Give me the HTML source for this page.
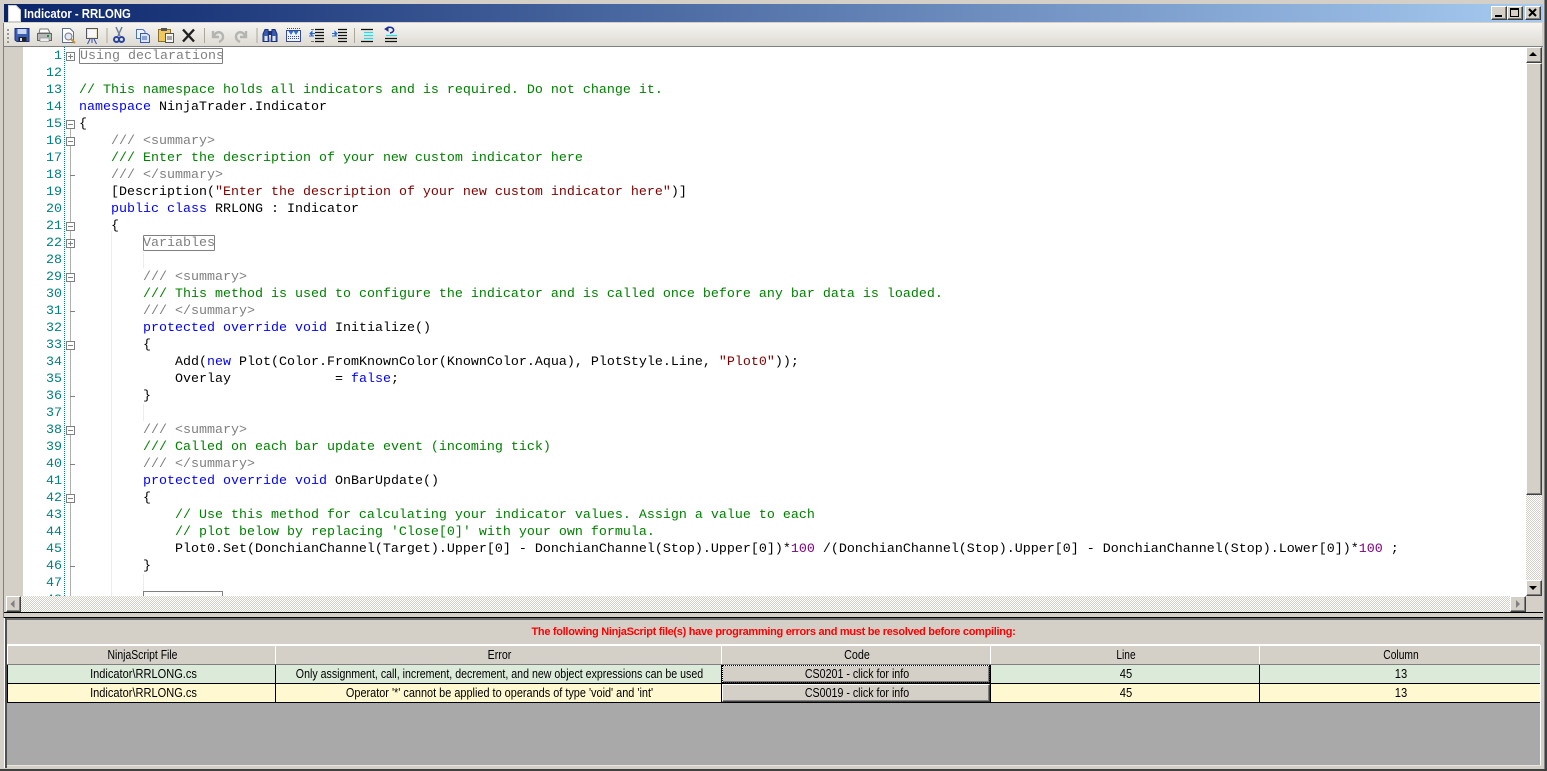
<!DOCTYPE html>
<html><head><meta charset="utf-8"><style>
html,body{margin:0;padding:0;background:#d4d0c8;overflow:hidden}
#w{position:relative;width:1547px;height:771px;overflow:hidden;background:#d4d0c8;font-family:"Liberation Sans",sans-serif}
.a{position:absolute}
.l{position:absolute;left:79px;margin-top:1px;height:17px;font:13.33px/17px "Liberation Mono",monospace;white-space:pre;color:#000}
.n{position:absolute;left:24px;margin-top:1px;width:38px;text-align:right;font:13.33px/17px "Liberation Mono",monospace;color:#008080}
.g{color:#008000}.b{color:#0000ff}.y{color:#808080}.r{color:#800000}.p{color:#800080}
.f{position:absolute;left:66px;width:7px;height:7px;border:1px solid #808080;background:#fff;box-sizing:content-box}
.f:before{content:"";position:absolute;left:1px;top:3px;width:5px;height:1px;background:#808080}
.f.x:after{content:"";position:absolute;left:3px;top:1px;width:1px;height:5px;background:#808080}
.e{position:absolute;left:70px;width:5px;height:1px;background:#808080}
.bx{position:absolute;border:1px solid #808080;box-sizing:border-box;height:16px;color:#808080;font:13.33px/15px "Liberation Mono",monospace;white-space:pre;border-radius:1px;background:#fff}
.i{position:absolute;width:1px;background:#ececec}
.btn{position:absolute;background:#d4d0c8;border-top:1px solid #fff;border-left:1px solid #fff;border-right:1px solid #404040;border-bottom:1px solid #404040;box-sizing:border-box;box-shadow:inset -1px -1px 0 #808080}
.chk{position:absolute;background-color:#fff;background-image:conic-gradient(#d4d0c8 25%,#fff 0 50%,#d4d0c8 0 75%,#fff 0);background-size:2px 2px}
.c{position:absolute;text-align:center;font-size:13px;color:#000;box-sizing:border-box;white-space:nowrap;overflow:hidden}
.c span{position:absolute;left:-99px;right:-101px;text-align:center;transform:scaleX(var(--s,.84));transform-origin:center}
.h{background:#d4d0c8;height:20px;top:645px;line-height:18px;border-top:1px solid #fff;border-left:1px solid #fff;border-bottom:1px solid #808080}
.r1{background:#dcebd9;height:19px;top:665px;line-height:18px;border-left:1px solid #000;border-bottom:1px solid #000}
.r2{background:#fff8d0;height:19px;top:684px;line-height:18px;border-left:1px solid #000;border-bottom:1px solid #000}
svg{position:absolute;overflow:visible}
</style></head><body><div id="w">

<!-- outer window edges -->
<div class="a" style="left:1544px;top:0;width:1px;height:771px;background:#808080"></div>
<div class="a" style="left:1545px;top:0;width:2px;height:771px;background:#404040"></div>
<div class="a" style="left:0;top:769px;width:1547px;height:2px;background:#404040"></div>
<div class="a" style="left:3px;top:23px;width:1px;height:595px;background:#808080"></div>
<div class="a" style="left:4px;top:618px;width:1px;height:150px;background:#fff"></div>

<!-- title bar -->
<div class="a" style="left:4px;top:4px;width:1539px;height:18px;background:linear-gradient(90deg,#0a246a,#a6caf0)"></div>
<svg style="left:7px;top:5px" width="15" height="17"><path d="M1.500 .5H9L13.500 5V16.500H1.500Z" fill="#fff" stroke="#d0d0d0"/><path d="M4 2H8.500L12 6V15H4Z" fill="#fff"/></svg>
<div class="a" style="left:24px;top:4px;height:18px;font:bold 13px/19px 'Liberation Sans',sans-serif;color:#fff;white-space:pre;transform:scaleX(.87);transform-origin:left">Indicator - RRLONG</div>
<div class="btn" style="left:1491px;top:6px;width:16px;height:14px"></div>
<div class="a" style="left:1495px;top:15px;width:7px;height:2px;background:#000"></div>
<div class="btn" style="left:1507px;top:6px;width:16px;height:14px"></div>
<div class="a" style="left:1510px;top:8px;width:9px;height:9px;border:1px solid #000;border-top-width:2px;box-sizing:border-box"></div>
<div class="btn" style="left:1525px;top:6px;width:16px;height:14px"></div>
<svg style="left:1528px;top:8px" width="10" height="9"><path d="M1 1L8 8M8 1L1 8" stroke="#000" stroke-width="2"/></svg>

<!-- toolbar -->
<div class="a" style="left:4px;top:23px;width:1538px;height:23px;background:linear-gradient(#f6f5f1,#dedbd4)"></div>
<div class="a" style="left:4px;top:46px;width:1539px;height:1px;background:#808080"></div>
<svg style="left:0;top:0" width="420" height="47">
<!-- grip -->
<path d="M7 29h2v2h-2zM7 33h2v2h-2zM7 37h2v2h-2zM7 41h2v2h-2z" fill="#9a978f"/>
<!-- save -->
<path d="M15 28.500H29V41.500H17L15 40Z" fill="#3a5fb8" stroke="#1c2f78"/><rect x="17.500" y="29" width="9" height="5" fill="#c8d6f2"/><rect x="18.500" y="37" width="8" height="4.500" fill="#222"/><rect x="20" y="38" width="2" height="3" fill="#ddd"/>
<!-- print -->
<path d="M40 29h8l2 4H39Z" fill="#fff" stroke="#777"/><path d="M37.500 33.500H51.500V40.500H37.500Z" fill="#b8b8b8" stroke="#666"/><rect x="40" y="38" width="9" height="3.500" fill="#eee" stroke="#777" stroke-width=".5"/><rect x="47" y="35" width="2" height="2" fill="#0a9a3a"/>
<!-- preview -->
<path d="M62.500 28.500H70L73.500 32V42.500H62.500Z" fill="#fff" stroke="#5c6c94"/><circle cx="68.500" cy="36.500" r="3.500" fill="#dfe8f4" stroke="#778"/><path d="M71 39L75 43" stroke="#c89030" stroke-width="2"/>
<!-- deploy -->
<path d="M86.500 28.500H97.500V38.500H86.500Z" fill="#eee8c8" stroke="#556"/><path d="M90 39L87.500 44M94 39L96.500 44M92 39V43" stroke="#3050a8"/><rect x="88" y="30" width="8" height="7" fill="#f8f8f8"/>
<!-- seps -->
<path d="M107 28V43M204.500 28V43M257 28V43M354.500 28V43" stroke="#aca899"/>
<!-- cut -->
<path d="M116 27L120 36M122 27L118 36" stroke="#6f7f99" stroke-width="1.500"/><circle cx="116.500" cy="39.500" r="2.500" fill="none" stroke="#2a45a0" stroke-width="2"/><circle cx="121.500" cy="39.500" r="2.500" fill="none" stroke="#2a45a0" stroke-width="2"/>
<!-- copy -->
<path d="M136.500 29.500H143L145 31.500V38.500H136.500Z" fill="#eef2fb" stroke="#5070b8"/><path d="M140.500 33.500H147L149.500 35.500V42.500H140.500Z" fill="#dbe6f8" stroke="#3a5cb0"/><path d="M142 37h5M142 39h5" stroke="#3a5cb0"/>
<!-- paste -->
<path d="M158.500 29.500H170.500V41.500H158.500Z" fill="#f0c860" stroke="#8a7030"/><rect x="161" y="28" width="6" height="3" fill="#555"/><path d="M165.500 33.500H173.500V42.500H165.500Z" fill="#f5f5f5" stroke="#555"/><path d="M167 37h5M167 39h5" stroke="#555"/>
<!-- delete -->
<path d="M183 29.500L194 41.500M194 29.500L183 41.500" stroke="#202020" stroke-width="2.400"/>
<!-- undo redo -->
<path d="M213 31V37H219M214 36C216 31 222 31 223 36C223.500 39 221 41 219 42" fill="none" stroke="#b4b4b0" stroke-width="2.400"/>
<path d="M246 31V37H240M245 36C243 31 237 31 236 36C235.500 39 238 41 240 42" fill="none" stroke="#b4b4b0" stroke-width="2.400"/>
<!-- binoculars -->
<path d="M263 41.500V34L265 29.500H268L269 41.500ZM271 41.500L272 29.500H275L277 34V41.500Z" fill="#3a5cb0" stroke="#1c2f78"/><rect x="268" y="31" width="4" height="4" fill="#1c2f78"/><rect x="264.500" y="36" width="3" height="5" fill="#dfe8f8"/><rect x="272.500" y="36" width="3" height="5" fill="#dfe8f8"/>
<!-- find in files -->
<rect x="286.500" y="30.500" width="14" height="11" fill="#eef2fb" stroke="#3a4a90"/><path d="M287 28.500h14" stroke="#3a4a90" stroke-dasharray="1 1"/><path d="M288 36.500h11M288 38.500h11" stroke="#3a4a90" stroke-dasharray="1 1"/><path d="M289 31l2 3 2-3M294 31l2 3 2-3" fill="#2a70d8" stroke="#2a70d8"/>
<!-- outdent -->
<path d="M315 29.500h9M315 32.500h9M315 35.500h9M315 38.500h9M315 41.500h9" stroke="#111" stroke-width="1.200"/><path d="M310 33.500h5M310 33.500l2-2v4Z" stroke="#2a6ad0" fill="#2a6ad0"/><path d="M309 36h5" stroke="#2a6ad0"/><path d="M311 29.500h3M311 41.500h3" stroke="#777"/>
<!-- indent -->
<path d="M338 29.500h9M338 32.500h9M338 35.500h9M338 38.500h9M338 41.500h9" stroke="#111" stroke-width="1.200"/><path d="M337 33.500h-5M337 33.500l-2-2v4Z" stroke="#2a6ad0" fill="#2a6ad0"/><path d="M332 36h5" stroke="#2a6ad0"/>
<!-- comment -->
<path d="M361 29.500h12M361 41.500h12" stroke="#111" stroke-width="1.200"/><path d="M364 32.500h9M364 35.500h9M364 38.500h9" stroke="#28d8e8" stroke-width="1.200"/>
<!-- uncomment -->
<path d="M385 41.500h12M385 38.500h12" stroke="#111" stroke-width="1.200"/><path d="M386 35.500h11" stroke="#28d8e8" stroke-width="1.200"/><path d="M388 27.500C394 26 396 32 390 33" fill="none" stroke="#1c2f98" stroke-width="1.600"/><path d="M385 29l3-2v4Z" fill="#1c2f98" stroke="#1c2f98"/>
</svg>

<!-- editor -->
<div class="a" style="left:4px;top:47px;width:1522px;height:549px;background:#fff;overflow:hidden">
<div class="a" style="left:0;top:0;width:19px;height:549px;background:#d4d0c8"></div>
</div>
<div class="a" style="left:64px;top:47px;width:1px;height:549px;background-image:linear-gradient(#008080 1px,#fff 1px);background-size:1px 2px"></div>
<div class="a" style="left:70px;top:128px;width:1px;height:468px;background:#b0b0b0"></div>

<div class="i" style="left:111px;top:231px;height:365px"></div>
<div class="i" style="left:143px;top:252px;height:16px"></div>
<div class="i" style="left:143px;top:404px;height:17px"></div>
<div class="i" style="left:143px;top:574px;height:18px"></div>

<div id="code">
<div class="n" style="top:47px">1</div>
<div class="n" style="top:64px">12</div>
<div class="n" style="top:81px">13</div>
<div class="n" style="top:98px">14</div>
<div class="n" style="top:115px">15</div>
<div class="n" style="top:132px">16</div>
<div class="n" style="top:149px">17</div>
<div class="n" style="top:166px">18</div>
<div class="n" style="top:183px">19</div>
<div class="n" style="top:200px">20</div>
<div class="n" style="top:217px">21</div>
<div class="n" style="top:234px">22</div>
<div class="n" style="top:251px">28</div>
<div class="n" style="top:268px">29</div>
<div class="n" style="top:285px">30</div>
<div class="n" style="top:302px">31</div>
<div class="n" style="top:319px">32</div>
<div class="n" style="top:336px">33</div>
<div class="n" style="top:353px">34</div>
<div class="n" style="top:370px">35</div>
<div class="n" style="top:387px">36</div>
<div class="n" style="top:404px">37</div>
<div class="n" style="top:421px">38</div>
<div class="n" style="top:438px">39</div>
<div class="n" style="top:455px">40</div>
<div class="n" style="top:472px">41</div>
<div class="n" style="top:489px">42</div>
<div class="n" style="top:506px">43</div>
<div class="n" style="top:523px">44</div>
<div class="n" style="top:540px">45</div>
<div class="n" style="top:557px">46</div>
<div class="n" style="top:574px">47</div>
<div class="n" style="top:591px">48</div>

<div class="f x" style="top:52px"></div>
<div class="f" style="top:120px"></div>
<div class="f" style="top:137px"></div>
<div class="e" style="top:175px"></div>
<div class="f" style="top:222px"></div>
<div class="f x" style="top:239px"></div>
<div class="f" style="top:273px"></div>
<div class="e" style="top:311px"></div>
<div class="f" style="top:341px"></div>
<div class="e" style="top:396px"></div>
<div class="f" style="top:426px"></div>
<div class="e" style="top:464px"></div>
<div class="f" style="top:494px"></div>
<div class="e" style="top:566px"></div>

<div class="bx" style="left:79px;top:48px;width:144px">Using declarations</div>
<div class="l g" style="top:81px">// This namespace holds all indicators and is required. Do not change it.</div>
<div class="l" style="top:98px"><span class="b">namespace</span> NinjaTrader.Indicator</div>
<div class="l" style="top:115px">{</div>
<div class="l" style="top:132px">    <span class="y">/// &lt;summary&gt;</span></div>
<div class="l" style="top:149px">    <span class="g">/// Enter the description of your new custom indicator here</span></div>
<div class="l" style="top:166px">    <span class="y">/// &lt;/summary&gt;</span></div>
<div class="l" style="top:183px">    [Description(<span class="r">"Enter the description of your new custom indicator here"</span>)]</div>
<div class="l" style="top:200px">    <span class="b">public</span> <span class="b">class</span> RRLONG : Indicator</div>
<div class="l" style="top:217px">    {</div>
<div class="bx" style="left:143px;top:235px;width:72px;text-indent:-1px">Variables</div>
<div class="l" style="top:268px">        <span class="y">/// &lt;summary&gt;</span></div>
<div class="l" style="top:285px">        <span class="g">/// This method is used to configure the indicator and is called once before any bar data is loaded.</span></div>
<div class="l" style="top:302px">        <span class="y">/// &lt;/summary&gt;</span></div>
<div class="l" style="top:319px">        <span class="b">protected</span> <span class="b">override</span> <span class="b">void</span> Initialize()</div>
<div class="l" style="top:336px">        {</div>
<div class="l" style="top:353px">            Add(<span class="b">new</span> Plot(Color.FromKnownColor(KnownColor.Aqua), PlotStyle.Line, <span class="r">"Plot0"</span>));</div>
<div class="l" style="top:370px">            Overlay             = <span class="b">false</span>;</div>
<div class="l" style="top:387px">        }</div>
<div class="l" style="top:421px">        <span class="y">/// &lt;summary&gt;</span></div>
<div class="l" style="top:438px">        <span class="g">/// Called on each bar update event (incoming tick)</span></div>
<div class="l" style="top:455px">        <span class="y">/// &lt;/summary&gt;</span></div>
<div class="l" style="top:472px">        <span class="b">protected</span> <span class="b">override</span> <span class="b">void</span> OnBarUpdate()</div>
<div class="l" style="top:489px">        {</div>
<div class="l g" style="top:506px">            // Use this method for calculating your indicator values. Assign a value to each</div>
<div class="l g" style="top:523px">            // plot below by replacing 'Close[0]' with your own formula.</div>
<div class="l" style="top:540px">            Plot0.Set(DonchianChannel(Target).Upper[0] - DonchianChannel(Stop).Upper[0])*<span class="p">100</span> /(DonchianChannel(Stop).Upper[0] - DonchianChannel(Stop).Lower[0])*<span class="p">100</span> ;</div>
<div class="l" style="top:557px">        }</div>
<div class="a" style="left:143px;top:591px;width:80px;height:6px;border:1px solid #808080;border-bottom:0;box-sizing:border-box"></div>
</div>

<!-- v scrollbar -->
<div class="chk" style="left:1526px;top:47px;width:16px;height:549px"></div>
<div class="btn" style="left:1526px;top:47px;width:16px;height:16px"></div>
<svg style="left:1529px;top:52px" width="9" height="5"><path d="M4 0L8 4H0Z" fill="#000"/></svg>
<div class="btn" style="left:1526px;top:63px;width:16px;height:432px"></div>
<div class="btn" style="left:1526px;top:580px;width:16px;height:16px"></div>
<svg style="left:1529px;top:586px" width="9" height="5"><path d="M0 0H8L4 4Z" fill="#000"/></svg>

<!-- h scrollbar -->
<div class="a" style="left:4px;top:596px;width:2px;height:16px;background:#d4d0c8"></div>
<div class="chk" style="left:6px;top:596px;width:1520px;height:16px"></div>
<div class="btn" style="left:6px;top:596px;width:15px;height:16px"></div>
<svg style="left:10px;top:600px" width="6" height="9"><path d="M4.500 0V8L.5 4Z" fill="#808080"/></svg>
<div class="btn" style="left:1510px;top:596px;width:16px;height:16px"></div>
<svg style="left:1516px;top:600px" width="6" height="9"><path d="M0 0V8L4 4Z" fill="#808080"/></svg>
<div class="a" style="left:1526px;top:596px;width:16px;height:16px;background:#d4d0c8"></div>

<!-- splitter -->
<div class="a" style="left:4px;top:612px;width:1539px;height:6px;background:#d4d0c8;border-top:1px solid #000;border-bottom:1px solid #000;box-sizing:border-box"></div>
<div class="a" style="left:5px;top:618px;width:1538px;height:2px;background:#6a6a6a"></div>
<div class="a" style="left:5px;top:618px;width:2px;height:150px;background:#505050"></div>

<!-- bottom panel -->
<div class="a" style="left:7px;top:620px;width:1533px;height:23px;background:#d4d0c8;text-align:center;color:#f00;font:bold 11px/25px 'Liberation Sans',sans-serif;white-space:nowrap;letter-spacing:-.3px">The following NinjaScript file(s) have programming errors and must be resolved before compiling:</div>
<div class="a" style="left:7px;top:644px;width:1533px;height:1px;background:#fff"></div>

<div class="c h" style="left:7px;width:268px"><span style="--s:.8">NinjaScript File</span></div>
<div class="c h" style="left:275px;width:446px"><span style="--s:.82">Error</span></div>
<div class="c h" style="left:721px;width:269px"><span style="--s:.83">Code</span></div>
<div class="c h" style="left:990px;width:269px"><span style="--s:.78">Line</span></div>
<div class="c h" style="left:1259px;width:281px"><span style="--s:.79">Column</span></div>

<div class="c r1" style="left:7px;width:268px"><span style="--s:.85;left:-98px;right:-102px">Indicator\RRLONG.cs</span></div>
<div class="c r1" style="left:275px;width:446px"><span style="--s:.817">Only assignment, call, increment, decrement, and new object expressions can be used</span></div>
<div class="c r1" style="left:721px;width:269px"></div>
<div class="c r1" style="left:990px;width:269px"><span style="--s:.86">45</span></div>
<div class="c r1" style="left:1259px;width:281px"><span style="--s:.86">13</span></div>

<div class="c r2" style="left:7px;width:268px"><span style="--s:.85;left:-98px;right:-102px">Indicator\RRLONG.cs</span></div>
<div class="c r2" style="left:275px;width:446px"><span style="--s:.839">Operator '*' cannot be applied to operands of type 'void' and 'int'</span></div>
<div class="c r2" style="left:721px;width:269px"></div>
<div class="c r2" style="left:990px;width:269px"><span style="--s:.86">45</span></div>
<div class="c r2" style="left:1259px;width:281px"><span style="--s:.86">13</span></div>

<div class="c btn" style="left:722px;top:665px;width:268px;height:18px;line-height:16px;outline:1px dotted #000;outline-offset:-1px"><span style="--s:.82">CS0201 - click for info</span></div>
<div class="c btn" style="left:722px;top:684px;width:268px;height:18px;line-height:16px"><span style="--s:.82">CS0019 - click for info</span></div>

<div class="a" style="left:7px;top:664px;width:1533px;height:1px;background:#808080"></div>
<div class="a" style="left:7px;top:703px;width:1533px;height:62px;background:#a9a9a9"></div>
<div class="a" style="left:1540px;top:645px;width:1px;height:120px;background:#fff"></div>
<div class="a" style="left:7px;top:765px;width:1534px;height:1px;background:#e8e6e0"></div>
</div></body></html>
